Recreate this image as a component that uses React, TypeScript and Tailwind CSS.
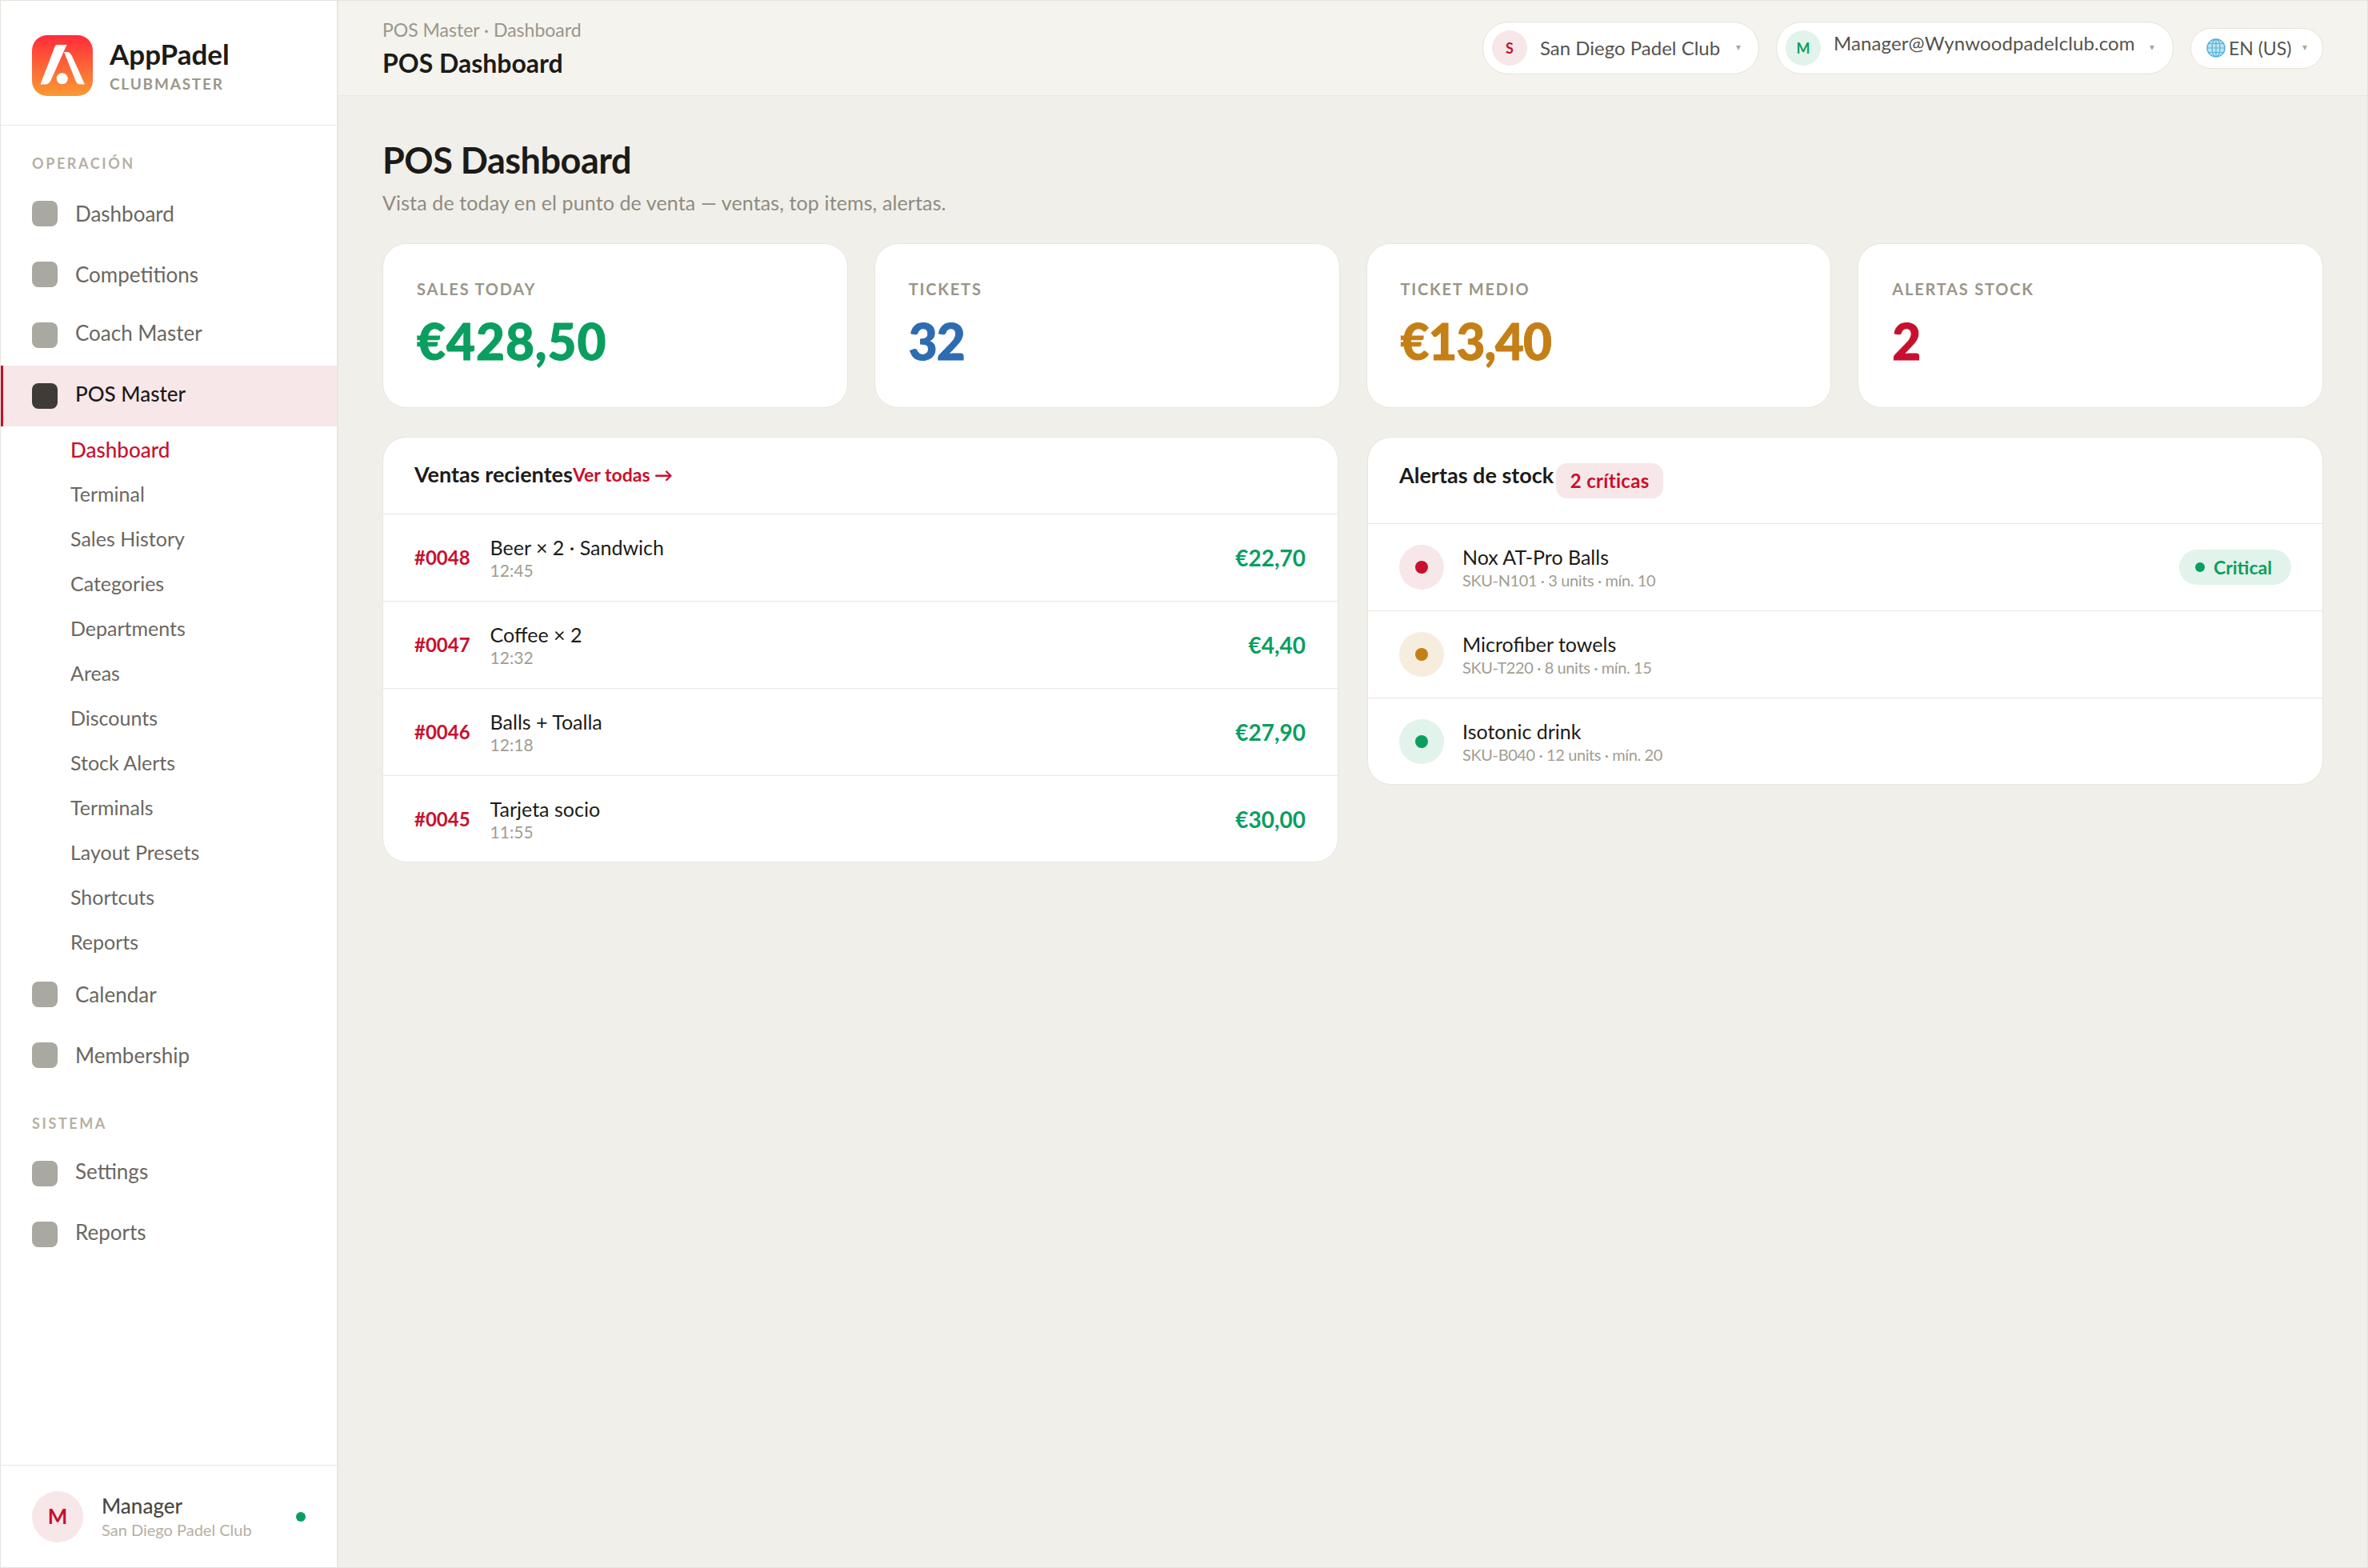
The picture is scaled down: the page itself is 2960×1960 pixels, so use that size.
const subItems = ['Dashboard', 'Terminal', 'Sales History', 'Categories', 'Departments', 'Areas', 'Discounts', 'Stock Alerts', 'Terminals', 'Layout Presets', 'Shortcuts', 'Reports']

const stats = [
  { label: 'SALES TODAY', value: '€428,50', color: 'text-[#0a9e5f] tracking-[1px]' },
  { label: 'TICKETS', value: '32', color: 'text-[#2d6cb0] tracking-[-1px]' },
  { label: 'TICKET MEDIO', value: '€13,40', color: 'text-[#c47f17] tracking-[-1px]' },
  { label: 'ALERTAS STOCK', value: '2', color: 'text-[#c8102e] tracking-[-1px]' },
]

const sales = [
  { id: '#0048', name: 'Beer × 2 · Sandwich', time: '12:45', total: '€22,70' },
  { id: '#0047', name: 'Coffee × 2', time: '12:32', total: '€4,40' },
  { id: '#0046', name: 'Balls + Toalla', time: '12:18', total: '€27,90' },
  { id: '#0045', name: 'Tarjeta socio', time: '11:55', total: '€30,00' },
]

const alerts = [
  { name: 'Nox AT-Pro Balls', sku: 'SKU-N101 · 3 units · mín. 10', ring: 'bg-[#f7e7e9]', dot: 'bg-[#c8102e]', badge: true },
  { name: 'Microfiber towels', sku: 'SKU-T220 · 8 units · mín. 15', ring: 'bg-[#f7eddf]', dot: 'bg-[#c47f17]', badge: false },
  { name: 'Isotonic drink', sku: 'SKU-B040 · 12 units · mín. 20', ring: 'bg-[#e1f3ea]', dot: 'bg-[#0a9e5f]', badge: false },
]

function Logo() {
  return (
    <svg width="76" height="76" viewBox="0 0 76 76" className="shrink-0">
      <defs>
        <linearGradient id="logoFill" x1="0" y1="0" x2="0" y2="1">
          <stop offset="0" stopColor="#ff2b3b" />
          <stop offset="1" stopColor="#fb9a32" />
        </linearGradient>
      </defs>
      <rect width="76" height="76" rx="19" fill="url(#logoFill)" />
      <path d="M31 12H43.5L23.5 56.5Q21 61.5 16.5 61.5H10.5L27.5 17Q29 12 31 12Z" fill="#fff" />
      <path d="M40 21H44Q48 21.5 50 26L66 61.5H60.5Q56.5 61.5 55 58Z" fill="#fff" />
      <circle cx="37.7" cy="54.3" r="7" fill="#fff" />
    </svg>
  )
}

function Globe() {
  return (
    <svg width="24" height="24" viewBox="0 0 24 24" className="shrink-0">
      <circle cx="12" cy="12" r="11" fill="#bfe3f2" stroke="#55b3d9" strokeWidth="1.5" />
      <ellipse cx="12" cy="12" rx="5" ry="11" fill="none" stroke="#55b3d9" strokeWidth="1.2" />
      <path d="M12 1V23M1.5 12H22.5M3 6.5H21M3 17.5H21" fill="none" stroke="#55b3d9" strokeWidth="1.2" />
    </svg>
  )
}

function Caret() {
  return (
    <svg width="6" height="6" viewBox="0 0 6 6" className="shrink-0">
      <polygon points="0,0 6,0 3,6" fill="#a9a597" />
    </svg>
  )
}

function NavRow({ label, active = false, raised = false }: { label: string; active?: boolean; raised?: boolean }) {
  return (
    <div className={`flex h-[76px] items-center gap-[22px] text-[26px] ${active ? 'border-l-[3px] border-[#c8102e] bg-[#f7e7e9] pl-[36px] font-medium text-[#1c1b18]' : 'pl-[39px] text-[#6b675f]'}`}>
      <div className={`h-[32px] w-[32px] rounded-[8px] ${active ? 'bg-[#3f3b37]' : 'bg-[#a9a8a1]'}`} />
      <span className={raised ? 'mb-[5px]' : ''}>{label}</span>
    </div>
  )
}

function SectionLabel({ children }: { children: string }) {
  return (
    <div className="flex h-[72px] items-end pb-[15px] pl-[39px] text-[18px] leading-[20px] font-bold tracking-[2.6px] text-[#b5b0a4]">
      {children}
    </div>
  )
}

export default function App() {
  return (
    <div className="flex h-[1960px] w-[2960px] overflow-hidden border border-[#e5e3dc] bg-[#f0efea] font-[Lato,sans-serif] text-[#1c1b18]">
      <aside className="flex w-[422px] shrink-0 flex-col border-r-2 border-[#e8e6df] bg-white">
        <div className="flex h-[156px] shrink-0 items-center gap-[21px] border-b border-[#e8e6df] pt-[6px] pl-[39px]">
          <Logo />
          <div>
            <div className="text-[35px] leading-[44px] font-bold">AppPadel</div>
            <div className="mt-[3px] text-[19px] leading-[26px] font-bold tracking-[1.8px] text-[#9b978a]">CLUBMASTER</div>
          </div>
        </div>
        <SectionLabel>OPERACIÓN</SectionLabel>
        <NavRow label="Dashboard" />
        <NavRow label="Competitions" />
        <NavRow label="Coach Master" raised />
        <NavRow label="POS Master" active raised />
        <div className="flex flex-col">
          {subItems.map((item, i) => (
            <div key={i} className={`flex h-[56px] items-center pt-[2px] pl-[87px] ${i === 0 ? 'text-[26px] font-medium text-[#c8102e]' : 'text-[25px] text-[#6b675f]'}`}>
              {item}
            </div>
          ))}
        </div>
        <NavRow label="Calendar" />
        <NavRow label="Membership" />
        <SectionLabel>SISTEMA</SectionLabel>
        <NavRow label="Settings" raised />
        <NavRow label="Reports" raised />
        <div className="mt-auto flex h-[128px] items-center border-t border-[#e8e6df] px-[39px]">
          <div className="flex h-[64px] w-[64px] items-center justify-center rounded-full bg-[#f7e7e9] text-[26px] font-bold text-[#c8102e]">M</div>
          <div className="ml-[23px] flex-1">
            <div className="text-[26px] leading-[32px] font-medium text-[#4a4945]">Manager</div>
            <div className="text-[20px] leading-[28px] text-[#b5b0a4]">San Diego Padel Club</div>
          </div>
          <div className="h-[12px] w-[12px] rounded-full bg-[#0a9e5f]" />
        </div>
      </aside>

      <div className="flex min-w-0 flex-1 flex-col">
        <header className="flex h-[119px] shrink-0 items-center justify-between border-b border-[#e8e6df] bg-[#f4f3ee] px-[55px]">
          <div>
            <div className="text-[23px] leading-[32px] text-[#9a968a]">POS Master · Dashboard</div>
            <div className="mt-[6px] text-[32px] leading-[40px] font-bold">POS Dashboard</div>
          </div>
          <div className="flex items-center gap-[21px]">
            <div className="flex h-[66px] w-[346px] items-center rounded-full border border-[#e5e3dc] bg-white pl-[11px]">
              <div className="flex h-[44px] w-[44px] items-center justify-center rounded-full bg-[#f7e7e9] text-[18px] font-bold text-[#c8102e]">S</div>
              <span className="ml-[16px] w-[245px] text-[24px] text-[#55534e]">San Diego Padel Club</span>
              <Caret />
            </div>
            <div className="flex h-[66px] w-[497px] items-center rounded-full border border-[#e5e3dc] bg-white pl-[11px]">
              <div className="flex h-[44px] w-[44px] items-center justify-center rounded-full bg-[#e1f3ea] text-[18px] font-bold text-[#0a9e5f]">M</div>
              <span className="mb-[12px] ml-[16px] w-[395px] text-[24px] tracking-[0.1px] text-[#55534e]">Manager@Wynwoodpadelclub.com</span>
              <Caret />
            </div>
            <div className="flex h-[51px] w-[166px] items-center rounded-full border border-[#e5e3dc] bg-white pl-[19px]">
              <Globe />
              <span className="ml-[4px] w-[92px] text-[23px] text-[#55534e]">EN (US)</span>
              <Caret />
            </div>
          </div>
        </header>

        <main className="flex-1 px-[55px] pt-[52px]">
          <h1 className="text-[45px] leading-[56px] font-bold tracking-[-0.5px]">POS Dashboard</h1>
          <p className="mt-[7px] text-[25px] leading-[36px] tracking-[0.12px] text-[#8f8b80]">Vista de today en el punto de venta — ventas, top items, alertas.</p>

          <div className="mt-[33px] grid grid-cols-4 gap-[33px]">
            {stats.map((s) => (
              <div key={s.label} className="h-[206px] rounded-[30px] border border-[#e8e6df] bg-white pt-[42px] pl-[42px]">
                <div className="text-[20px] leading-[28px] font-bold tracking-[1.8px] text-[#9a968a]">{s.label}</div>
                <div className={`mt-[15px] text-[62px] leading-[72px] font-black [-webkit-text-stroke:1px_currentColor] ${s.color}`}>{s.value}</div>
              </div>
            ))}
          </div>

          <div className="mt-[36px] grid grid-cols-2 items-start gap-[36px]">
            <section className="overflow-hidden rounded-[30px] border border-[#e8e6df] bg-white">
              <div className="flex h-[96px] items-center border-b border-[#e8e6df] pb-[2px] pl-[39px]">
                <span className="text-[27px] font-bold">Ventas recientes</span>
                <span className="text-[23px] font-bold text-[#c8102e]">Ver todas →</span>
              </div>
              {sales.map((s, i) => (
                <div key={s.id} className={`flex items-center pr-[40px] pl-[39px] ${i < 3 ? 'h-[109px] border-b border-[#e8e6df]' : 'h-[107px]'}`}>
                  <span className="text-[24px] font-bold text-[#c8102e]">{s.id}</span>
                  <div className="ml-[25px] flex-1">
                    <div className="text-[25px] leading-[32px]">{s.name}</div>
                    <div className="text-[21px] leading-[26px] text-[#a19d92]">{s.time}</div>
                  </div>
                  <span className="text-[28px] font-bold text-[#0a9e5f]">{s.total}</span>
                </div>
              ))}
            </section>

            <section className="overflow-hidden rounded-[30px] border border-[#e8e6df] bg-white">
              <div className="flex h-[108px] items-center gap-[3px] border-b border-[#e8e6df] pl-[39px]">
                <span className="mb-[12px] text-[27px] font-bold">Alertas de stock</span>
                <span className="flex h-[44px] w-[134px] items-center justify-center rounded-[14px] bg-[#f7e7e9] text-[24px] tracking-[0.3px] font-bold text-[#c8102e]">2 críticas</span>
              </div>
              {alerts.map((a, i) => (
                <div key={a.name} className={`flex items-center px-[39px] ${i < 2 ? 'h-[109px] border-b border-[#e8e6df]' : 'h-[107px]'}`}>
                  <div className={`flex h-[56px] w-[56px] items-center justify-center rounded-full ${a.ring}`}>
                    <div className={`h-[16px] w-[16px] rounded-full ${a.dot}`} />
                  </div>
                  <div className="ml-[23px] flex-1">
                    <div className="text-[25px] leading-[32px]">{a.name}</div>
                    <div className="text-[20px] leading-[26px] tracking-[-0.4px] text-[#a19d92]">{a.sku}</div>
                  </div>
                  {a.badge && (
                    <span className="flex h-[44px] w-[140px] items-center gap-[11px] rounded-full bg-[#e1f3ea] pl-[20px] text-[23px] font-bold text-[#0a9e5f]">
                      <span className="h-[12px] w-[12px] rounded-full bg-[#0a9e5f]" />
                      Critical
                    </span>
                  )}
                </div>
              ))}
            </section>
          </div>
        </main>
      </div>
    </div>
  )
}
